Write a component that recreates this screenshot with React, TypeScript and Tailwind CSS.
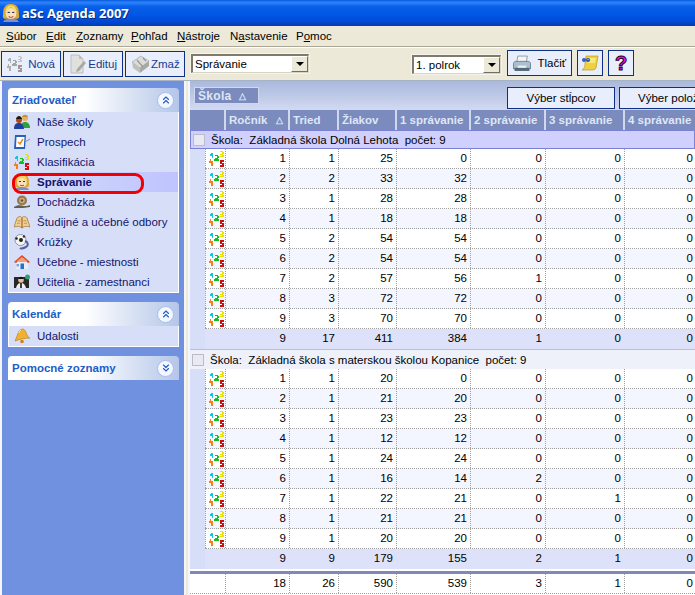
import React from "react";
import { ChevronsUp, ChevronsDown } from "lucide-react";

const R = ({ x, y, w = 1, h = 1, c }: { x: number; y: number; w?: number; h?: number; c: string }) => (
  <rect x={x} y={y} width={w} height={h} fill={c} />
);

function Num({ gray = false }: { gray?: boolean }) {
  const a = gray ? "#a8aeb6" : "#12c8d8";
  const b = gray ? "#c4c4c4" : "#e8e000";
  const c = gray ? "#9eaa9e" : "#10c020";
  const d = gray ? "#b4aea8" : "#f08020";
  const e = gray ? "#a09494" : "#d01010";
  return (
    <svg width="16" height="16" viewBox="0 0 16 16" shapeRendering="crispEdges" className="shrink-0">
      <R x={2} y={2} w={2} h={1} c={a} /><R x={1} y={3} w={3} h={2} c={a} /><R x={3} y={5} w={1} h={2} c={a} />
      <R x={11} y={0} w={3} h={1} c={b} /><R x={13} y={1} w={2} h={2} c={b} /><R x={11} y={3} w={3} h={1} c={b} /><R x={13} y={4} w={2} h={2} c={b} /><R x={11} y={5} w={2} h={1} c={b} />
      <R x={6} y={4} w={3} h={1} c={c} /><R x={8} y={5} w={2} h={2} c={c} /><R x={6} y={7} w={3} h={1} c={c} /><R x={5} y={8} w={5} h={2} c={c} />
      <R x={1} y={8} w={1} h={3} c={d} /><R x={0} y={10} w={4} h={2} c={d} /><R x={2} y={12} w={2} h={3} c={d} />
      <R x={11} y={9} w={4} h={2} c={e} /><R x={11} y={11} w={2} h={1} c={e} /><R x={11} y={12} w={4} h={1} c={e} /><R x={13} y={13} w={2} h={1} c={e} /><R x={11} y={14} w={4} h={2} c={e} />
    </svg>
  );
}

const Face = ({ size = 16 }: { size?: number }) => (
  <svg width={size} height={size} viewBox="0 0 16 16" className="shrink-0">
    <path d="M1 8C1 2 4 0 8 0s7 2 7 8c0 3 1 4-1 5H2C0 12 1 10 1 8z" fill="#d8a838" />
    <ellipse cx="8" cy="8.500" rx="4.800" ry="5" fill="#fbe0b8" />
    <path d="M3 7c2-1 4-3 5-4.500 1 2 3 3.500 5 4.500 0-3-2-6-5-6S3 4 3 7z" fill="#f4d868" />
    <rect x="5" y="7" width="2" height="1" fill="#303060" />
    <rect x="9" y="7" width="2" height="1" fill="#303060" />
    <path d="M6 11c1 1 3 1 4 0" stroke="#c03030" strokeWidth="1" fill="none" />
    <path d="M1 16c1-3 4-3 7-3s6 0 7 3z" fill="#8090c0" />
  </svg>
);
const People = () => (
  <svg width="16" height="16" viewBox="0 0 16 16" className="shrink-0">
    <circle cx="11" cy="4" r="3" fill="#e8b060" /><path d="M8 3c1-3 5-3 6 0z" fill="#c89030" />
    <path d="M7 14c0-5 2-6 4-6s5 1 5 6z" fill="#30a040" />
    <circle cx="5" cy="6" r="3" fill="#b04818" /><path d="M2 5c1-4 5-4 6 0z" fill="#201810" />
    <path d="M0 15c0-5 2-6 5-6s4 1 5 6z" fill="#2040a0" />
  </svg>
);
const Board = () => (
  <svg width="16" height="16" viewBox="0 0 16 16" className="shrink-0">
    <path d="M1 1h11l-1 14H0z" fill="#2860c0" />
    <path d="M2.500 3h8l-.7 10H2z" fill="#fff" />
    <path d="M4 8l2 2 3-5" stroke="#e09020" strokeWidth="1.500" fill="none" />
    <path d="M11 8l5-3" stroke="#8090b0" strokeWidth="1" />
  </svg>
);
const Snail = () => (
  <svg width="16" height="16" viewBox="0 0 16 16" className="shrink-0">
    <circle cx="8" cy="6.500" r="5" fill="#987850" />
    <circle cx="8" cy="6.500" r="2.800" fill="#c8b080" />
    <circle cx="8" cy="6.500" r="1.200" fill="#685030" />
    <path d="M0 13c3-2 6-2 9-1 3 0 5 0 7-1v2c-4 1-10 1-16 1z" fill="#606050" />
  </svg>
);
const Book = () => (
  <svg width="16" height="16" viewBox="0 0 16 16" className="shrink-0">
    <path d="M0 13L3 4c2-2 4-2 5 0 1-2 3-2 5 0l3 9c-3-1-6-1-8 1-2-2-5-2-8-1z" fill="#f0d090" stroke="#a07030" strokeWidth=".7" />
    <path d="M8 4v10" stroke="#905020" strokeWidth="1" />
    <path d="M3.500 7c1-.5 2-.5 3 0M3 9.500c1-.5 2-.5 3 0M9.500 7c1-.5 2-.5 3 0M10 9.500c1-.5 2-.5 3 0" stroke="#b08040" strokeWidth=".8" fill="none" />
  </svg>
);
const Ball = () => (
  <svg width="16" height="16" viewBox="0 0 16 16" className="shrink-0">
    <circle cx="6.500" cy="6" r="5.500" fill="#f4f4f4" stroke="#606060" strokeWidth=".6" />
    <circle cx="7" cy="6" r="2" fill="#202020" /><circle cx="2.500" cy="4.500" r="1.300" fill="#202020" /><circle cx="10" cy="2.500" r="1.200" fill="#303030" />
    <path d="M11 7c3 1 4 4 1 6-2 1-5 2-6 1" stroke="#5060a0" strokeWidth="2" fill="none" />
  </svg>
);
const House = () => (
  <svg width="16" height="16" viewBox="0 0 16 16" className="shrink-0">
    <path d="M2 8h12v7H2z" fill="#e8eef8" />
    <path d="M0 8l8-7 8 7-2 1-6-5-6 5z" fill="#e04820" />
    <path d="M3 7l5-4 5 4v1H3z" fill="#f0a080" />
    <rect x="6.500" y="9.500" width="3.500" height="5.500" fill="#2870c8" />
    <rect x="2.500" y="10" width="2.500" height="2.500" fill="#70a8e0" />
  </svg>
);
const Teacher = () => (
  <svg width="16" height="16" viewBox="0 0 16 16" className="shrink-0">
    <rect x="0" y="3" width="15" height="11" fill="#282828" />
    <circle cx="13.500" cy="3" r="2.500" fill="#30a070" />
    <circle cx="7" cy="6" r="2.800" fill="#e8c098" />
    <path d="M4 5c1-3 5-3 6 0z" fill="#101010" />
    <path d="M2 14c1-4 3-5 5-5s4 1 5 5z" fill="#f0f0f0" />
    <path d="M6 9h2v5H6z" fill="#404040" />
  </svg>
);
const Bell = () => (
  <svg width="16" height="16" viewBox="0 0 16 16" className="shrink-0">
    <path d="M1 13L3 8c1-3 2-6 5-7 3 0 4 3 5 6 1 2 2 3 3 3-4 0-10 1-15 3z" fill="#f0b030" stroke="#b87818" strokeWidth=".6" />
    <path d="M5 5c0-1 1-2 2-3" stroke="#fff0a0" strokeWidth="1" fill="none" />
    <circle cx="8" cy="13.500" r="1.800" fill="#d08020" />
  </svg>
);
const DocIcon = () => (
  <svg width="18" height="20" viewBox="0 0 18 20" className="shrink-0">
    <path d="M2 1h8l4 4v14H2z" fill="#e0e0dc" stroke="#b4b4b0" strokeWidth=".8" />
    <path d="M10 1v4h4z" fill="#c0c0bc" />
    <path d="M8 15l7-8 2 2-7 8-3 1z" fill="#a8a8a4" />
  </svg>
);
const Del = () => (
  <svg width="20" height="20" viewBox="0 0 20 20" className="shrink-0">
    <path d="M1 8l9-6 8 5-9 7z" fill="#dcdcd8" stroke="#b0b0ac" strokeWidth=".8" />
    <path d="M1 8l8 6v5l-7-5z" fill="#c0c0bc" />
    <path d="M9 14l9-7v5l-9 7z" fill="#a8a8a4" />
    <path d="M6 6l6 7M12 4l3 3" stroke="#989894" strokeWidth="1.200" />
  </svg>
);
const Printer = () => (
  <svg width="20" height="17" viewBox="0 0 18 16" className="shrink-0">
    <path d="M5 1h9l-1 6H4z" fill="#f4f4f4" stroke="#8090a0" strokeWidth=".8" />
    <path d="M1 8c0-1 1-2 2-2h12c1 0 2 1 2 2v5H1z" fill="#a8c0d0" stroke="#607888" strokeWidth=".8" />
    <rect x="2" y="12" width="14" height="3" fill="#506878" />
    <rect x="5" y="10" width="8" height="2" fill="#f0f0f0" />
  </svg>
);
const Note = () => (
  <svg width="18" height="16" viewBox="0 0 18 16" className="shrink-0">
    <path d="M5 1h12l-2 12c-1 2-3 2-4 2H1c2-1 3-3 3-6z" fill="#f0d040" stroke="#b09010" strokeWidth=".6" />
    <path d="M7 3h8l-1 5H6z" fill="#f8e878" />
    <circle cx="3" cy="5" r="2" fill="#3060c0" /><circle cx="7" cy="5" r="2" fill="#2050b0" /><circle cx="7" cy="4.500" r=".8" fill="#90b0f0" />
  </svg>
);

function SideHead({ title, down = false }: { title: string; down?: boolean }) {
  return (
    <div className="h-[24px] flex items-center justify-between rounded-t-[4px] bg-gradient-to-r from-white from-45% to-[#b4c6e8] pl-[4px] pr-[5px]">
      <span className="font-bold text-[#215dc6] text-[11.5px]">{title}</span>
      <span className="w-[17px] h-[17px] rounded-full bg-[#f4f7ff] border border-[#a8bce8] flex items-center justify-center">
        {down ? <ChevronsDown size={12} strokeWidth={2.2} color="#215dc6" /> : <ChevronsUp size={12} strokeWidth={2.2} color="#215dc6" />}
      </span>
    </div>
  );
}

function SideItem({ icon, label, active = false }: { icon: React.ReactNode; label: string; active?: boolean }) {
  return (
    <div className={`h-[20px] flex items-center pl-[5px] ${active ? "bg-gradient-to-r from-[#d6dff7] to-[#bfc3ff]" : ""}`}>
      {icon}
      <span className={`ml-[7px] text-[#14146e] whitespace-nowrap ${active ? "font-bold" : ""}`}>{label}</span>
    </div>
  );
}

function ToolBtn({ w, icon, label, className = "" }: { w: string; icon: React.ReactNode; label: string; className?: string }) {
  return (
    <div className={`${w} h-[26px] border border-[#0f2f86] bg-[#e8eefb] flex items-center pl-[5px] pr-[5px] justify-between shrink-0 ${className}`}>
      {icon}
      <span className="text-[#1a3a90] whitespace-nowrap">{label}</span>
    </div>
  );
}

function Combo({ w, h, label, className = "" }: { w: string; h: string; label: string; className?: string }) {
  return (
    <div className={`${w} ${h} bg-[#f6f4ea] p-[1px] shrink-0 ${className}`}>
      <div className="h-full border-t-2 border-l-2 border-[#7f7b6c] border-b border-r border-b-[#d8d4c4] border-r-[#d8d4c4] bg-white flex items-center justify-between">
        <span className="pl-[2px] text-black">{label}</span>
        <div className="w-[17px] h-full bg-[#ece9d8] border-t border-l border-white border-r border-b border-r-[#716f64] border-b-[#716f64] flex items-center justify-center">
          <div className="w-0 h-0 border-l-[4px] border-r-[4px] border-t-[4px] border-l-transparent border-r-transparent border-t-black" />
        </div>
      </div>
    </div>
  );
}

const cols = ["w-[64px]", "w-[49px]", "w-[58px]", "w-[74px]", "w-[75px]", "w-[79px]", "w-[72px]"];

function HeadCell({ w, label, sort = false }: { w: string; label: string; sort?: boolean }) {
  return (
    <div className={`${w} shrink-0 h-full border-r-2 border-[#d0d8ec] flex items-center justify-between pl-[3px] pr-[3px] font-bold text-[#dfe6f7] whitespace-nowrap overflow-hidden`}>
      <span>{label}</span>
      {sort && <span className="text-[9px] mr-[2px]">△</span>}
    </div>
  );
}

function Row({ v, alt }: { v: (string | number)[]; alt: boolean }) {
  return (
    <div className={`h-[20px] flex border-b border-dotted border-[#a0a0a0] ${alt ? "bg-[#f3f6ff]" : "bg-white"}`}>
      <div className="w-[21px] shrink-0 pl-[2px] flex items-center justify-center border-l border-r border-dotted border-[#a0a0a0]">
        <Num />
      </div>
      {v.map((x, i) => (
        <div key={i} className={`${cols[i]} shrink-0 text-right pr-[3px] leading-[19px] border-r border-dotted border-[#a0a0a0] text-black`}>{x}</div>
      ))}
    </div>
  );
}

function SumRow({ v }: { v: (string | number)[] }) {
  return (
    <div className="h-[20px] flex bg-[#dde2fa]">
      <div className="w-[21px] shrink-0" />
      {v.map((x, i) => (
        <div key={i} className={`${cols[i]} shrink-0 text-right pr-[4px] leading-[19px] text-black`}>{x}</div>
      ))}
    </div>
  );
}

function Group({ title, rows, sum, active = false }: { title: string; rows: number[][]; sum: number[]; active?: boolean }) {
  return (
    <div>
      <div className={`h-[19px] flex items-center pl-[2px] whitespace-pre overflow-hidden ${active ? "bg-[#d0d0ff] border border-[#7d80d8]" : "bg-[#eef0fa]"}`}>
        <span className="w-[12px] h-[12px] bg-[#e9e9f2] border border-[#bcbcc8] shrink-0" />
        <span className="ml-[6px] text-black">{title}</span>
      </div>
      <div className="flex">
        <div className="w-[15px] shrink-0 bg-[#d6dff7]" />
        <div className="flex-1 min-w-0">
          {rows.map((r, i) => <Row key={i} v={r} alt={i % 2 === 1} />)}
          <SumRow v={sum} />
        </div>
      </div>
    </div>
  );
}

const g1 = [[1,1,25,0,0,0,0],[2,2,33,32,0,0,0],[3,1,28,28,0,0,0],[4,1,18,18,0,0,0],[5,2,54,54,0,0,0],[6,2,54,54,0,0,0],[7,2,57,56,1,0,0],[8,3,72,72,0,0,0],[9,3,70,70,0,0,0]];
const g2 = [[1,1,20,0,0,0,0],[2,1,21,20,0,0,0],[3,1,23,23,0,0,0],[4,1,12,12,0,0,0],[5,1,24,24,0,0,0],[6,1,16,14,2,0,0],[7,1,22,21,0,1,0],[8,1,21,21,0,0,0],[9,1,20,20,0,0,0]];

const menu: [string, string, string, string][] = [
  ["w-[40px]", "", "S", "úbor"],
  ["w-[30px]", "", "E", "dit"],
  ["w-[55px]", "", "Z", "oznamy"],
  ["w-[46px]", "", "P", "ohľad"],
  ["w-[53px]", "", "N", "ástroje"],
  ["w-[66px]", "N", "a", "stavenie"],
  ["w-[50px]", "P", "o", "moc"],
];

export default function App() {
  return (
    <div className="w-[695px] h-[595px] overflow-hidden bg-[#ece9d8] text-[11.5px] leading-[14px] flex flex-col relative" style={{ fontFamily: '"Liberation Sans",Arial,sans-serif' }}>
      <div className="h-[26px] shrink-0 flex items-center pl-[2px] bg-[linear-gradient(180deg,#0a5be0_0%,#2c84fb_10%,#0a5fe8_25%,#0055e5_60%,#0048d0_85%,#003ab0_100%)]">
        <Face size={18} />
        <span className="ml-[2px] text-white font-bold text-[13px] [text-shadow:1px_1px_0_#0a2a80]" style={{ fontFamily: '"Open Sans",sans-serif' }}>aSc Agenda 2007</span>
      </div>

      <div className="h-[20px] shrink-0 flex items-center pl-[6px] text-black">
        {menu.map(([w, pre, u, rest]) => (
          <span key={u + rest} className={`${w} shrink-0`}>{pre}<span className="underline">{u}</span>{rest}</span>
        ))}
      </div>

      <div className="h-[2px] shrink-0 border-t border-b border-t-[#aca899] border-b-white" />

      <div className="h-[32px] shrink-0 flex items-center pl-[1px]">
        <ToolBtn w="w-[60px]" icon={<Num gray />} label="Nová" />
        <ToolBtn w="w-[60px]" icon={<DocIcon />} label="Edituj" className="ml-[2px]" />
        <ToolBtn w="w-[60px]" icon={<Del />} label="Zmaž" className="ml-[2px]" />
        <Combo w="w-[120px]" h="h-[21px]" label="Správanie" className="ml-[5px] mb-[1px]" />
        <Combo w="w-[91px]" h="h-[21px]" label="1. polrok" className="ml-[101px] mt-[1px]" />
        <div className="w-[65px] h-[26px] ml-[5px] mb-[2px] border border-[#0f2f86] bg-[#e8eefb] flex items-center justify-between pl-[4px] pr-[5px] shrink-0">
          <Printer />
          <span className="text-black">Tlačiť</span>
        </div>
        <div className="w-[26px] h-[26px] ml-[5px] mb-[2px] border border-[#0f2f86] bg-[#e8eefb] flex items-center justify-center shrink-0"><Note /></div>
        <div className="w-[26px] h-[26px] ml-[5px] mb-[2px] border border-[#0f2f86] bg-[#e8eefb] flex items-center justify-center shrink-0">
          <span className="font-bold text-[20px] leading-none text-[#f010e0] [-webkit-text-stroke:1px_#200020]">?</span>
        </div>
      </div>

      <div className="h-px shrink-0 bg-[#a4b4c4]" />

      <div className="flex-1 min-h-0 flex">
        <div className="w-[186px] shrink-0 border-l-2 border-r-2 border-[#f4f6fc] bg-[#7091e0] pl-[6px] pr-[5px] pt-[7px] flex flex-col gap-[9px] relative">
          <div>
            <SideHead title="Zriaďovateľ" />
            <div className="bg-[#d6dff7] border-l border-r border-b border-white">
              <SideItem icon={<People />} label="Naše školy" />
              <SideItem icon={<Board />} label="Prospech" />
              <SideItem icon={<Num />} label="Klasifikácia" />
              <SideItem icon={<Face />} label="Správanie" active />
              <SideItem icon={<Snail />} label="Dochádzka" />
              <SideItem icon={<Book />} label="Študijné a učebné odbory" />
              <SideItem icon={<Ball />} label="Krúžky" />
              <SideItem icon={<House />} label="Učebne - miestnosti" />
              <SideItem icon={<Teacher />} label="Učitelia - zamestnanci" />
            </div>
          </div>
          <div>
            <SideHead title="Kalendár" />
            <div className="bg-[#d6dff7] border-l border-r border-b border-white">
              <SideItem icon={<Bell />} label="Udalosti" />
            </div>
          </div>
          <SideHead title="Pomocné zoznamy" down />
          <div className="absolute left-[10px] top-[92px] w-[132px] h-[21px] border-[3px] border-[#f00000] rounded-[9px]" />
        </div>

        <div className="w-[2px] shrink-0 bg-[#ece9d8]" />

        <div className="flex-1 min-w-0 overflow-hidden border-l-2 border-[#f4f6fc] bg-white flex flex-col">
          <div className="h-[29px] shrink-0 bg-gradient-to-b from-[#aab8dc] to-[#d2daf2] flex items-start pt-[6px] pl-[4px]">
            <div className="w-[65px] h-[17px] shrink-0 bg-[#7b8bbd] border border-[#d0d8ec] pl-[3px] flex items-center font-bold text-[#dfe6f7] text-[12px] tracking-[0.3px]">
              Škola<span className="text-[9px] ml-[7px]">△</span>
            </div>
            <div className="w-[108px] h-[22px] ml-[248px] border border-[#0f2f86] bg-[#e8eefb] flex items-center justify-center text-black shrink-0">Výber stĺpcov</div>
            <div className="w-[108px] h-[22px] ml-[4px] border border-[#0f2f86] bg-[#e8eefb] flex items-center pl-[18px] text-black whitespace-nowrap shrink-0">Výber položiek</div>
          </div>
          <div className="h-[20px] shrink-0 bg-[#7b8bbd] flex">
            <div className="w-[36px] shrink-0 border-r-2 border-[#d0d8ec]" />
            <HeadCell w={cols[0]} label="Ročník" sort />
            <HeadCell w={cols[1]} label="Tried" />
            <HeadCell w={cols[2]} label="Žiakov" />
            <HeadCell w={cols[3]} label="1 správanie" />
            <HeadCell w={cols[4]} label="2 správanie" />
            <HeadCell w={cols[5]} label="3 správanie" />
            <HeadCell w={cols[6]} label="4 správanie" />
          </div>
          <Group title="Škola:  Základná škola Dolná Lehota  počet: 9" rows={g1} sum={[9,17,411,384,1,0,0]} active />
          <div className="h-px bg-[#b8c0d8]" />
          <Group title="Škola:  Základná škola s materskou školou Kopanice  počet: 9" rows={g2} sum={[9,9,179,155,2,1,0]} />
          <div className="h-[2px] bg-white" />
          <div className="h-[3px] shrink-0 bg-[#8088b8]" />
          <div className="h-[20px] flex bg-white border-b border-dotted border-[#a0a0a0]">
            <div className="w-[36px] shrink-0 border-r border-dotted border-[#a0a0a0]" />
            {[18,26,590,539,3,1,0].map((x, i) => (
              <div key={i} className={`${cols[i]} shrink-0 text-right pr-[3px] leading-[19px] border-r border-dotted border-[#a0a0a0] text-black`}>{x}</div>
            ))}
          </div>
        </div>
      </div>
    </div>
  );
}
